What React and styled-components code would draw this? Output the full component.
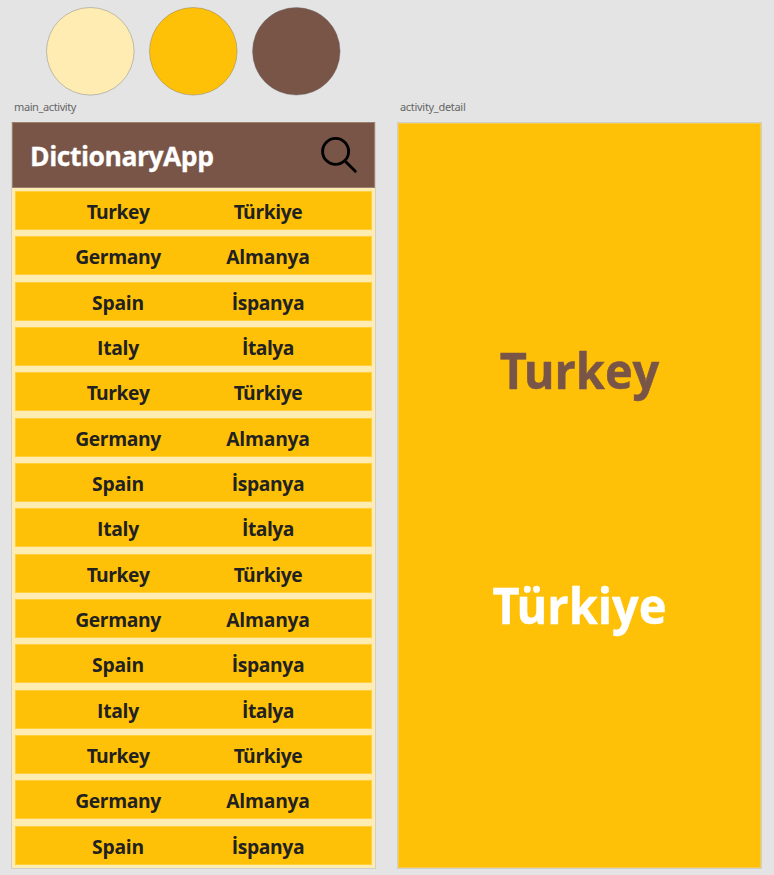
import React from "react";
import styled, { createGlobalStyle } from "styled-components";

const GlobalStyle = createGlobalStyle`
  *, *::before, *::after { box-sizing: border-box; }
  body {
    margin: 0;
    background: #e4e4e4;
    font-family: "Open Sans", "Noto Sans", sans-serif;
    overflow: hidden;
  }
`;

const Board = styled.main`
  width: 774px;
  height: 875px;
  background: #e4e4e4;
`;

const Palette = styled.div`
  display: flex;
  gap: 14.4px;
  height: 99px;
  padding: 6.8px 0 0 46.2px;
`;

const Swatch = styled.svg`
  display: block;
  width: 88.6px;
  height: 88.6px;
  overflow: visible;
  fill: ${(p) => p.$color};
  stroke: rgba(112, 112, 112, 0.4);
  stroke-width: 1;
`;

const Artboards = styled.div`
  display: flex;
  gap: 21px;
  padding-left: 11px;
`;

const Artboard = styled.section`
  width: 365px;
`;

const ArtboardLabel = styled.div`
  height: 23px;
  padding-left: 3px;
  font-family: "Noto Sans", sans-serif;
  font-size: 11px;
  line-height: 16px;
  letter-spacing: ${(p) => p.$spacing}px;
  color: #666;
`;

const Screen = styled.div`
  display: flex;
  flex-direction: column;
  height: 747px;
  border: 1px solid #d2d0c6;
  background: ${(p) => p.$color};
  box-shadow: ${(p) => (p.$inset ? "inset 0 0 0 1px #f6cb4c" : "none")};
`;

const AppBar = styled.header`
  display: flex;
  align-items: center;
  justify-content: space-between;
  height: 66px;
  margin-top: -1px;
  padding: 0 16px 0 17px;
  border: 1px solid #9a7f6c;
  background: #795548;
`;

const AppTitle = styled.h1`
  margin: 0;
  padding-top: 2px;
  font-size: 26.5px;
  font-weight: 700;
  line-height: 36px;
  letter-spacing: -0.48px;
  color: #fff;
  -webkit-text-stroke: 0.3px currentColor;
`;

const WordList = styled.div`
  display: flex;
  flex-direction: column;
  gap: 6.33px;
  padding: 3px 3px 0;
`;

const WordRow = styled.div`
  display: grid;
  grid-template-columns: 56px 92px 58px 92px;
  height: 39px;
  border: 1px solid #ffcf3c;
  background: #ffc107;
`;

const Word = styled.span`
  grid-column: ${(p) => p.$column};
  font-size: 19.3px;
  font-weight: 700;
  line-height: 39px;
  letter-spacing: ${(p) => p.$spacing}px;
  text-align: center;
  white-space: nowrap;
  color: #212121;

  &::first-letter {
    letter-spacing: ${(p) => p.$lead ?? p.$spacing}px;
  }
`;

const DetailWord = styled.div`
  padding-top: ${(p) => p.$top}px;
  font-size: 51px;
  font-weight: 700;
  line-height: 70px;
  text-align: center;
  color: ${(p) => p.$color};
  -webkit-text-stroke: 0.5px currentColor;
  transform: scaleX(0.92);

  &::first-letter {
    letter-spacing: -3.5px;
  }
`;

const countries = [
  { source: "Turkey", target: "Türkiye", a: -0.5, b: -0.4, lead: -1.7 },
  { source: "Germany", target: "Almanya", a: -0.4, b: -0.2 },
  { source: "Spain", target: "İspanya", a: -0.2, b: -0.4 },
  { source: "Italy", target: "İtalya", a: -0.3, b: -0.5 },
];

const rows = Array.from({ length: 15 }, (_, i) => countries[i % countries.length]);

function ColorSwatch({ color }) {
  return (
    <Swatch $color={color} viewBox="0 0 88.6 88.6">
      <circle cx="44.3" cy="44.3" r="43.8" />
    </Swatch>
  );
}

function SearchIcon() {
  return (
    <svg width="38" height="38" viewBox="0 0 38 38" fill="none" stroke="#000" strokeWidth="2.9" strokeLinecap="round">
      <circle cx="15.6" cy="15.4" r="13" />
      <path d="M25 25 35.3 35.2" />
    </svg>
  );
}

export default function App() {
  return (
    <>
      <GlobalStyle />
      <Board>
        <Palette>
          <ColorSwatch color="#ffecb3" />
          <ColorSwatch color="#ffc107" />
          <ColorSwatch color="#795548" />
        </Palette>
        <Artboards>
          <Artboard>
            <ArtboardLabel $spacing={-0.4}>main_activity</ArtboardLabel>
            <Screen $color="#ffecb3">
              <AppBar>
                <AppTitle>DictionaryApp</AppTitle>
                <SearchIcon />
              </AppBar>
              <WordList>
                {rows.map((row, i) => (
                  <WordRow key={i}>
                    <Word $column={2} $spacing={row.a} $lead={row.lead}>{row.source}</Word>
                    <Word $column={4} $spacing={row.b} $lead={row.lead}>{row.target}</Word>
                  </WordRow>
                ))}
              </WordList>
            </Screen>
          </Artboard>
          <Artboard>
            <ArtboardLabel $spacing={-0.3}>activity_detail</ArtboardLabel>
            <Screen $color="#ffc107" $inset>
              <DetailWord $top={211} $color="#795548">Turkey</DetailWord>
              <DetailWord $top={165} $color="#fff">Türkiye</DetailWord>
            </Screen>
          </Artboard>
        </Artboards>
      </Board>
    </>
  );
}
